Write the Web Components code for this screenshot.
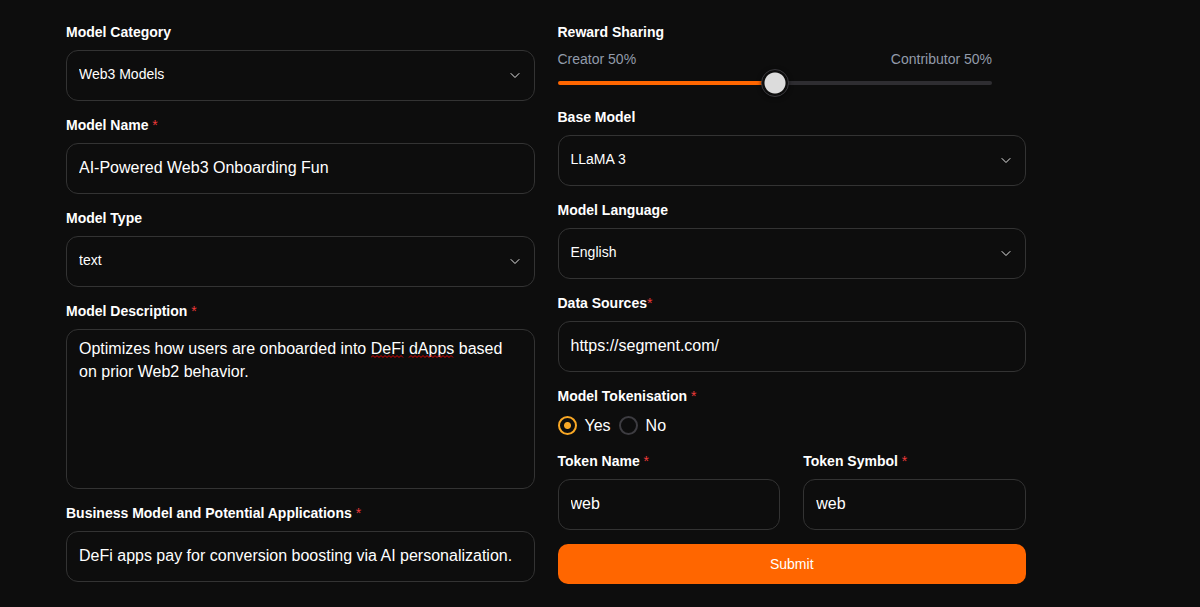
<!DOCTYPE html>
<html lang="en">
<head>
<meta charset="utf-8">
<meta name="viewport" content="width=device-width, initial-scale=1">
<title>Create model</title>
<style>
  html { background: #0d0d0d; }
  body { margin: 0; font-family: "Liberation Sans", Arial, sans-serif; color: #fff; }
</style>
</head>
<body>
<model-form>
  <form-column slot="left">
    <select-field label="Model Category" value="Web3 Models"></select-field>
    <text-field label="Model Name" value="AI-Powered Web3 Onboarding Fun" required></text-field>
    <select-field label="Model Type" value="text"></select-field>
    <area-field label="Model Description" value="Optimizes how users are onboarded into DeFi dApps based on prior Web2 behavior." required></area-field>
    <text-field label="Business Model and Potential Applications" value="DeFi apps pay for conversion boosting via AI personalization." required></text-field>
  </form-column>
  <form-column slot="right">
    <share-slider label="Reward Sharing" value="50"></share-slider>
    <select-field label="Base Model" value="LLaMA 3"></select-field>
    <select-field label="Model Language" value="English"></select-field>
    <text-field label="Data Sources" value="https://segment.com/" required tight></text-field>
    <choice-field label="Model Tokenisation" options="Yes,No" value="Yes" required></choice-field>
    <field-pair>
      <text-field label="Token Name" value="web" required></text-field>
      <text-field label="Token Symbol" value="web" required></text-field>
    </field-pair>
    <submit-button>Submit</submit-button>
  </form-column>
</model-form>

<script>
const base = `
  *, *::before, *::after { box-sizing: border-box; }
  :host { display: block; min-width: 0; }
  .label { display: block; margin: 0 0 8px; padding: 0; font-size: 14px; font-weight: 700; line-height: 20px; color: #fff; }
  .star { color: #ef3a3a; font-weight: 400; }
  .control {
    display: block; width: 100%; height: 51px; margin: 0; padding: 0 12px 2px;
    border: 1px solid #333; border-radius: 12px; outline: none;
    background-color: #0d0d0d; color: #fff; font: 16px/23px "Liberation Sans", Arial, sans-serif;
  }
  .control:focus-visible { border-color: #f60; }
`;

class BaseElement extends HTMLElement {
  connectedCallback() {
    if (this.shadowRoot) return;
    this.attachShadow({ mode: 'open' }).innerHTML = `<style>${base}${this.styles()}</style>${this.markup()}`;
    this.ready();
  }
  attr(name) { return this.getAttribute(name) || ''; }
  caption() {
    const gap = this.hasAttribute('tight') ? '' : ' ';
    return this.attr('label') + (this.hasAttribute('required') ? `${gap}<span class="star">*</span>` : '');
  }
  styles() { return ''; }
  markup() { return '<slot></slot>'; }
  ready() {}
}

customElements.define('model-form', class extends BaseElement {
  styles() { return `
    form { display: grid; grid-template-columns: 1fr 1fr; gap: 23px; align-items: start; padding: 22px 174px 22px 66px; }
    @media (max-width: 800px) { form { grid-template-columns: 1fr; padding: 22px; } }
  `; }
  markup() { return '<form><slot name="left"></slot><slot name="right"></slot></form>'; }
});

customElements.define('form-column', class extends BaseElement {
  styles() { return ':host { display: flex; flex-direction: column; gap: 14px; }'; }
});

customElements.define('field-pair', class extends BaseElement {
  styles() { return ':host { display: grid; grid-template-columns: 1fr 1fr; gap: 23px; }'; }
});

customElements.define('text-field', class extends BaseElement {
  markup() { return `<label class="label" for="c">${this.caption()}</label>
    <input class="control" id="c" type="text" spellcheck="false" value="${this.attr('value')}">`; }
});

customElements.define('area-field', class extends BaseElement {
  styles() { return `
    .wrap { position: relative; }
    .control { height: 160px; padding: 7px 12px; resize: none; }
    svg { position: absolute; left: 305px; top: 25px; pointer-events: none; }
  `; }
  markup() { return `<label class="label" for="c">${this.caption()}</label>
    <div class="wrap">
      <textarea class="control" id="c" spellcheck="false">${this.attr('value')}</textarea>
      <svg width="84" height="5" fill="none" stroke="#e00000" aria-hidden="true">
        <path d="M0 3.5l2-2 2 2 2-2 2 2 2-2 2 2 2-2 2 2 2-2 2 2 2-2 2 2 2-2 2 2 2-2 2 2"/>
        <path d="M38 3.5l2-2 2 2 2-2 2 2 2-2 2 2 2-2 2 2 2-2 2 2 2-2 2 2 2-2 2 2 2-2 2 2 2-2 2 2 2-2 2 2 2-2 2 2"/>
      </svg>
    </div>`; }
});

customElements.define('select-field', class extends BaseElement {
  styles() { return `
    .wrap { display: grid; align-items: center; }
    .wrap > * { grid-area: 1 / 1; }
    .control { appearance: none; font-size: 14px; }
    svg { justify-self: end; margin-right: 15px; pointer-events: none; }
  `; }
  markup() { return `<label class="label" for="c">${this.caption()}</label>
    <div class="wrap">
      <select class="control" id="c"><option>${this.attr('value')}</option></select>
      <svg width="10" height="7" viewBox="0 0 10 7" fill="none" stroke="#e4e4e4" stroke-linecap="round" stroke-linejoin="round" aria-hidden="true"><path d="M1 1.5l4 4 4-4"/></svg>
    </div>`; }
});

customElements.define('share-slider', class extends BaseElement {
  styles() { return `
    :host { margin-bottom: -5px; }
    .body { padding-right: 34px; }
    .ends { display: flex; justify-content: space-between; font-size: 14px; line-height: 18px; color: #929baa; }
    input { --fill: 50%; display: block; width: 100%; height: 30px; margin: 0; appearance: none; background: none; outline: none; }
    input::-webkit-slider-runnable-track {
      height: 4px; border-radius: 2px;
      background: linear-gradient(to right, #f60 var(--fill), #2e2d31 var(--fill));
    }
    input::-webkit-slider-thumb {
      appearance: none; width: 28px; height: 28px; margin-top: -12px; border: 1px solid #38373b; border-radius: 50%;
      background: radial-gradient(circle closest-side, #dcdcdc 10px, #0d0d0d 11px); background-origin: border-box; box-shadow: 0 1px 4px #0008;
    }
  `; }
  markup() { return `<label class="label" for="c">${this.caption()}</label>
    <div class="body">
      <div class="ends"><span id="a"></span><span id="b"></span></div>
      <input id="c" type="range" min="0" max="100" value="${this.attr('value')}">
    </div>`; }
  ready() {
    const find = id => this.shadowRoot.getElementById(id);
    const input = find('c');
    const update = () => {
      find('a').textContent = `Creator ${input.value}%`;
      find('b').textContent = `Contributor ${100 - input.value}%`;
      input.style.setProperty('--fill', input.value + '%');
    };
    input.addEventListener('input', update);
    update();
  }
});

customElements.define('choice-field', class extends BaseElement {
  styles() { return `
    fieldset { margin: 0; padding: 0; border: 0; min-width: 0; }
    .row { display: flex; gap: 8px; }
    .row label { display: flex; align-items: center; gap: 8px; font-size: 16px; line-height: 23px; }
    input { appearance: none; flex: none; width: 19px; height: 19px; margin: 0; border: 2px solid #3d3c41; border-radius: 50%; }
    input:checked { border-color: #f9a825; background: radial-gradient(circle, #f9a825 3px, transparent 4px); }
  `; }
  markup() { return `<fieldset><legend class="label">${this.caption()}</legend><div class="row">${
    this.attr('options').split(',').map(o => `<label><input type="radio" name="r" value="${o}"${o === this.attr('value') ? ' checked' : ''}>${o}</label>`).join('')
  }</div></fieldset>`; }
});

customElements.define('submit-button', class extends BaseElement {
  styles() { return `
    button { display: block; width: 100%; height: 40px; padding: 0; border: 0; border-radius: 10px; background: #f60; color: #fff; font: 14px/20px "Liberation Sans", Arial, sans-serif; cursor: pointer; }
  `; }
  markup() { return '<button type="button"><slot></slot></button>'; }
});
</script>
</body>
</html>
